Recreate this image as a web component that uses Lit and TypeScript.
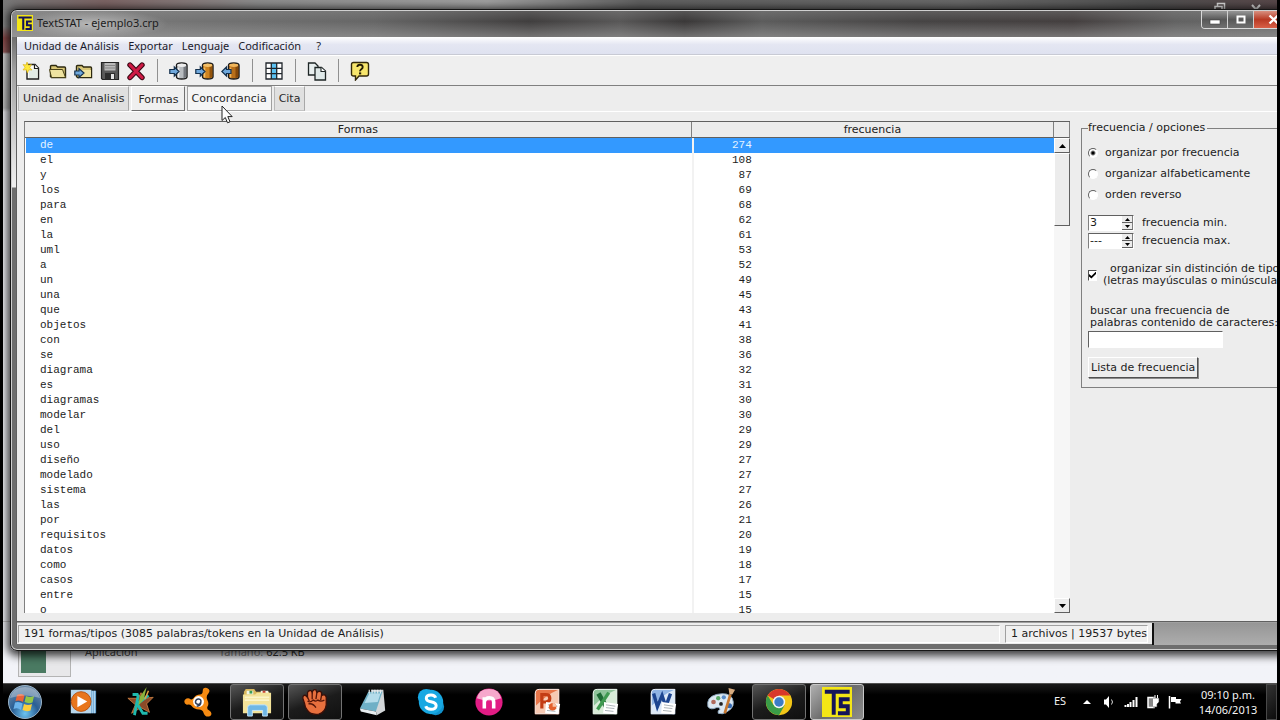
import { LitElement, html, css, svg, nothing } from "lit";
import { customElement, state } from "lit/decorators.js";
import { classMap } from "lit/directives/class-map.js";

type Row = [string, number];

const ROWS: Row[] = [
  ["de", 274], ["el", 108], ["y", 87], ["los", 69], ["para", 68], ["en", 62],
  ["la", 61], ["uml", 53], ["a", 52], ["un", 49], ["una", 45], ["que", 43],
  ["objetos", 41], ["con", 38], ["se", 36], ["diagrama", 32], ["es", 31],
  ["diagramas", 30], ["modelar", 30], ["del", 29], ["uso", 29], ["diseño", 27],
  ["modelado", 27], ["sistema", 27], ["las", 26], ["por", 21],
  ["requisitos", 20], ["datos", 19], ["como", 18], ["casos", 17],
  ["entre", 15], ["o", 15],
];

const tsLogo = svg`
  <rect width="32" height="32" fill="#f4e616"/>
  <path d="M3 5H29.500M12.500 5V29.500M29.500 13H20V20.500H27.500V28H17" fill="none" stroke="#14145a" stroke-width="4.200"/>`;

const cylinder = (light: string, mid: string, dark: string, back: boolean) => svg`
  <path d="M7.5 4.2C7.5 2.8 10 2 12.700 2S18 2.800 18 4.200V15.800C18 17.200 15.500 18 12.700 18S7.500 17.200 7.500 15.800Z" fill="${mid}" stroke="#1c1c1c" stroke-width="1.400"/>
  <path d="M14.500 6V17.200L17.300 16V4.800Z" fill="${dark}"/>
  <path d="M9.500 6.500V16.500" stroke="${light}" stroke-width="1.600"/>
  <ellipse cx="12.700" cy="4.300" rx="4.500" ry="1.700" fill="${light}"/>
  <path d="${back ? "M10 8.500H5.500V6L0.800 10.500L5.500 15V12.500H10Z" : "M0.800 8.500H5.300V6L10 10.500L5.300 15V12.500H0.800Z"}" fill="#6fa8dc" stroke="#14304c" stroke-width="1.200"/>`;

const folder = svg`
  <path d="M2.500 15.500V5.500Q2.500 4.500 3.500 4.500H8L9.500 6H16.500Q17.500 6 17.500 7V16.500H3.500Z" fill="#d9c777" stroke="#2e2a10" stroke-width="1.400"/>`;

const toolIcons: Record<string, unknown> = {
  nuevo: svg`
    <path d="M5 3.500H13L16.500 7V18H5Z" fill="#fbfbf4" stroke="#1e1e1e" stroke-width="1.400"/>
    <path d="M7 9L15.500 8V17H7Z" fill="#e2ebe6"/>
    <path d="M12.500 3.500V7.500H16.500" fill="#fff" stroke="#1e1e1e" stroke-width="1.200"/>
    <path d="M5 1L6.300 4.200L9.500 3.500L7.800 6.500L10 9L6.800 8.800L5.500 12L4.300 8.800L1 9L3 6.300L1 3.500L4 4Z" fill="#ffe93b" stroke="#d8ae10" stroke-width=".6"/>`,
  abrir: svg`${folder}
    <path d="M3.500 16.500L1.500 8.500H14.500L17.500 16.500Z" fill="#efe3a0" stroke="#4a4318" stroke-width="1"/>`,
  importar: svg`${folder}
    <path d="M4 16L6 9H17V16Z" fill="#efe3a0"/>
    <path d="M.8 10H5V7.500L10 12L5 16.500V14H.8Z" fill="#6fa8dc" stroke="#14304c" stroke-width="1.200"/>`,
  guardar: svg`
    <path d="M1.500 1.500H18.500V18.500H2.500L1.500 17.500Z" fill="#5a5a5a" stroke="#242424" stroke-width="1.200"/>
    <rect x="4.500" y="2" width="11" height="7.500" fill="#b9b9b9"/>
    <path d="M5 4.500H15M5 7H15" stroke="#858585"/>
    <rect x="5" y="12" width="10" height="6.500" fill="#2e2e2e"/>
    <rect x="11" y="13" width="3" height="5" fill="#e4e4e4"/>`,
  borrar: svg`
    <path d="M4 4L16 16.500M16 4L4 16.500" stroke="#3a0814" stroke-width="5.400" stroke-linecap="round"/>
    <path d="M4 4L16 16.500M16 4L4 16.500" stroke="#cf1a45" stroke-width="3.200" stroke-linecap="round"/>`,
  base: cylinder("#eeeeee", "#b8bcc0", "#74787e", false),
  agregar: cylinder("#f3c06a", "#cf8420", "#93540c", false),
  quitar: cylinder("#f0b65c", "#b86f1a", "#84480a", true),
  tabla: svg`
    <rect x="2" y="2" width="16" height="16" fill="#fff"/>
    <rect x="7" y="2" width="6" height="16" fill="#5cc2f2"/>
    <path d="M2 2H18V18H2ZM7.300 2V18M12.700 2V18M2 7.300H18M2 12.700H18" fill="none" stroke="#20262c" stroke-width="1.300"/>`,
  copiar: svg`
    <path d="M1.500 2H8L11 5V14H1.500Z" fill="#e8efef" stroke="#1e2626" stroke-width="1.300"/>
    <path d="M8 6.500H14.500L18.500 10V19H8Z" fill="#dfe9e9" stroke="#1e2626" stroke-width="1.300"/>
    <path d="M14 6.500V10.500H18.500" fill="#fff" stroke="#1e2626" stroke-width="1.100"/>`,
  ayuda: svg`
    <path d="M3.500 1.500H16.500Q18.500 1.500 18.500 3.500V13Q18.500 15 16.500 15H9L5.500 19V15H3.500Q1.500 15 1.500 13V3.500Q1.500 1.500 3.500 1.500Z" fill="#f8e66c" stroke="#33290a" stroke-width="1.400"/>
    <path d="M7.300 6Q7.500 3.800 10 3.800T12.700 6Q12.700 7.300 11.300 8.200T10.100 10.300" fill="none" stroke="#241c04" stroke-width="1.900"/>
    <rect x="9" y="11.400" width="2.200" height="2" fill="#241c04"/>`,
};

const TOOL_GROUPS: [string, string][][] = [
  [["nuevo", "Nuevo corpus"], ["abrir", "Abrir corpus"], ["importar", "Importar corpus"], ["guardar", "Guardar"], ["borrar", "Borrar"]],
  [["base", "Añadir archivo"], ["agregar", "Añadir de la web"], ["quitar", "Quitar archivo"]],
  [["tabla", "Exportar tabla"]],
  [["copiar", "Copiar"]],
  [["ayuda", "Ayuda"]],
];

const officePage = (a: string, b: string) => svg`
  <path d="M7 2H29V29H3V7Q3 2 7 2Z" fill="${a}"/>
  <path d="M4 20Q16 8 28 3V28H4Z" fill="${b}"/>
  <path d="M3.500 14V7Q3.500 2.500 8 2.500H28.500V28.500H3.500Z" fill="none" stroke="#f4f4f4" stroke-width="1"/>`;

const note = svg`
  <path d="M15 16L30 18L28 29L14 28Z" fill="#fff"/>
  <path d="M17 19L27 20.500M17 22L26 23M16 25L25 26" stroke="#a8b0b4" stroke-width="1"/>`;

const taskIcons: Record<string, unknown> = {
  media: svg`
    <path d="M5 4H30V28H5Z" fill="#4f93c8"/>
    <path d="M26.500 4V28M28.500 4V28" stroke="#d5ecfa"/>
    <path d="M3 3H25V28H3Z" fill="#b8d6ea"/>
    <circle cx="14" cy="15.500" r="10.500" fill="#e8761c" stroke="#b9500c"/>
    <path d="M10 9.500L20.500 15.500L10 21.500Z" fill="#fff"/>`,
  estrella: svg`
    <path d="M16 6L19 12L29 11L22 18L25 27L16 22L6 28L10 19L2 12L13 12Z" fill="#8c4a28" stroke="#d88a48" stroke-width=".8"/>
    <path d="M7 8H12L13 11M13 9L9 30M24 9L12 18L18 28H23" fill="none" stroke="#1fb9ae" stroke-width="3"/>
    <path d="M22 0L19 13L13 20L15 10Z" fill="#8cb43c"/>
    <path d="M24 4L20 13" stroke="#e8a040" stroke-width="1.600"/>`,
  avast: svg`
    <path d="M17 8Q20 8 20 4Q20 0 24.500 1Q29 3 26 7Q23 10 25 14Q27 18 25 21Q24 24 27 25Q31 28 28 31Q23 33 21 28Q20 24 16 24Q11 24 8 20Q6 18 3 19Q-1 17 1 13.500Q4 11 7 13Q9 14 11 11Q13 8 17 8Z" fill="#f58a12"/>
    <circle cx="15.500" cy="15.500" r="5.800" fill="#fff"/>
    <path d="M18 16Q17 19 14.500 18.500Q12 18 12.300 15.300Q13 12.500 15.800 12.800Q18.500 13.200 18 16Q18 20 13.500 20.500" fill="none" stroke="#2f3f5c" stroke-width="1.600"/>`,
  carpeta: svg`
    <path d="M2 5L4 2H13L15 5H29V26H2Z" fill="#d9b85e"/>
    <path d="M5 4H12V8H5ZM20 4H28V9H20Z" fill="#f2f7e8"/>
    <path d="M8 4H11V7H8Z" fill="#3b9c55"/><path d="M22 4H25V7H22Z" fill="#c84536"/>
    <path d="M1 8H14L16 6H31V28H1Z" fill="#f3e39a"/>
    <path d="M3 11H29M3 14H29" stroke="#fbf4c8" stroke-width="2"/>
    <path d="M6 31V22Q6 19 9 19H24Q27 19 27 22V31H22V25H11V31Z" fill="#6fb7e6" stroke="#c9e8fa"/>`,
  mano: svg`
    <path d="M5 18L3 12Q3 8 6 9L8 11L8 6Q9 3 12 4L13 6Q14 2 17 3L18 6Q21 3 23 6L23 9Q27 7 28 11L28 19Q27 27 20 29Q11 30 8 25Q5 21 5 18Z" fill="#e8703e" stroke="#3a0f08" stroke-width="1.400"/>
    <path d="M8 11L10 15M13 6V13M18 6L17 13M23 9L22 14M8 15Q11 17 14 14Q17 16 19 14Q22 16 26 14M9 18Q14 17 17 22" fill="none" stroke="#551508" stroke-width="1.400"/>`,
  bloc: svg`
    <path d="M14 3H27L29 25L20 30Z" fill="#d2d6d8"/>
    <path d="M11 5L26 5L19 26L2 23Z" fill="#6fb0c6"/>
    <path d="M12 7L24 7L21 16L7 17Z" fill="#b4dcea"/>
    <path d="M2 23L19 26L20 30L3 26Z" fill="#e8eef0"/>
    <path d="M12 3V7M15 3V7M18 3V7M21 3V7M24 3V7" stroke="#e8eef0" stroke-width="1.200"/>`,
  skype: svg`
    <circle cx="11" cy="11" r="9" fill="#16a9e6"/><circle cx="21" cy="21" r="9" fill="#1192cc"/><circle cx="16" cy="16" r="13" fill="#18a8e2"/>
    <path d="M21 11.500Q20 8.500 16 8.500Q11 8.500 11 12Q11 14.800 16 15.800Q21.500 17 21.500 20Q21.300 23.800 16 23.800Q11.500 23.800 10.300 20.500" fill="none" stroke="#fff" stroke-width="3.200"/>`,
  nimbuzz: svg`
    <circle cx="16" cy="16" r="14.500" fill="#e21c84"/>
    <path d="M3 12Q5 2 16 2T29 12Q16 17 3 12Z" fill="#f6a8cc"/>
    <path d="M11 23V11M11 16Q12 11.500 16.500 11.500Q21 11.500 21 16V23" fill="none" stroke="#fff" stroke-width="3.800"/>`,
  powerpoint: svg`${officePage("#e8764a", "#f7c9b2")}
    <path d="M10.500 23V8H14.500Q19 8 19 12T14.500 16H10.500" fill="none" stroke="#c33c14" stroke-width="3.400"/>${note}
    <circle cx="22" cy="21" r="4" fill="#e4602c"/><path d="M22 21V17A4 4 0 0 1 26 21Z" fill="#f8c4a8"/>`,
  excel: svg`${officePage("#8fc49a", "#d8ecd8")}
    <path d="M9 7L19 24" stroke="#1e6b34" stroke-width="5"/><path d="M20 6L8 24" stroke="#3f9a50" stroke-width="3.600"/>${note}`,
  word: svg`${officePage("#8fb4e4", "#dce9f8")}
    <path d="M6 7L10 21L15 9L19 21L24 7" fill="none" stroke="#1c4590" stroke-width="3.600"/>${note}`,
  paint: svg`
    <path d="M2 21Q0 11 11 8Q24 5 28 12Q32 21 23 26Q17 30 13 28Q12 25 15 24Q15 21 11 22Q5 25 2 21Z" fill="#dce8f2" stroke="#8aa4bc"/>
    <circle cx="8" cy="16" r="2.500" fill="#b06a5c"/><circle cx="13" cy="12" r="2.300" fill="#58a868"/><circle cx="19" cy="11" r="2.300" fill="#5a8cc8"/><circle cx="25" cy="20" r="2.700" fill="#3468b0"/><circle cx="16" cy="18" r="2" fill="#222"/>
    <path d="M26 8L20 28" stroke="#c87830" stroke-width="2.800"/>
    <path d="M24 1L31 3L28 8L25 8Z" fill="#d8ac80"/>`,
  chrome: svg`
    <circle cx="16" cy="16" r="14" fill="#f2c618"/>
    <path d="M16 16L3.900 9A14 14 0 0 1 28.100 9Z" fill="#d8382a"/>
    <path d="M3.900 9A14 14 0 0 0 16 30L22 19.500L10 19Z" fill="#3a9c48"/>
    <path d="M16 9H28.100L30 16L22 19Z" fill="#f2c618"/>
    <circle cx="16" cy="16" r="6.600" fill="#f4f4f4"/><circle cx="16" cy="16" r="5" fill="#3b7cc6"/>`,
  textstat: tsLogo,
};

const TASKS: { id: string; label: string; open?: boolean; current?: boolean }[] = [
  { id: "media", label: "Reproductor" },
  { id: "estrella", label: "Editor" },
  { id: "avast", label: "Antivirus" },
  { id: "carpeta", label: "Explorador", open: true },
  { id: "mano", label: "Grabador", open: true },
  { id: "bloc", label: "Bloc de notas" },
  { id: "skype", label: "Skype" },
  { id: "nimbuzz", label: "Nimbuzz" },
  { id: "powerpoint", label: "PowerPoint" },
  { id: "excel", label: "Excel" },
  { id: "word", label: "Word" },
  { id: "paint", label: "Paint" },
  { id: "chrome", label: "Chrome", open: true },
  { id: "textstat", label: "TextSTAT", open: true, current: true },
];

const TABS = ["Unidad de Analisis", "Formas", "Concordancia", "Cita"];

const reset = css`
  :host, :host * { box-sizing: border-box; }
  button { margin: 0; padding: 0; border: 0; background: none; font: inherit; color: inherit; }
  a { color: inherit; text-decoration: none; }
  svg { display: block; }
`;

@customElement("frequency-table")
class FrequencyTable extends LitElement {
  @state() private selected = 0;

  static styles = [reset, css`
    :host { display: flex; min-width: 0; min-height: 0; border-left: 1px solid #808080; border-top: 1px solid #606060; background: #fff; }
    .list { flex: 1; min-width: 0; overflow: hidden; }
    table { width: 100%; border-collapse: separate; border-spacing: 0; table-layout: fixed; }
    .forms { width: 64.8%; }
    th { height: 16px; padding: 0; background: #ececec; border-bottom: 1px solid #606060; border-right: 1px solid #808080; font: 11px/14px "DejaVu Sans", sans-serif; color: #222; }
    td { height: 15px; padding: 0 0 0 14px; font: 11px/15px "Liberation Mono", monospace; color: #1c1c1c; border-left: 1px solid #fff; }
    td + td { border-left: 2px solid #f2f2f2; padding: 0; }
    .count { display: block; width: 58px; text-align: right; }
    .selected td { background: #3399ff; color: #e4f3ff; }
    .scroll { width: 16px; display: flex; flex-direction: column; align-items: stretch; background: #f6f6f6; }
    .corner { height: 16px; background: #ececec; border-bottom: 1px solid #606060; border-right: 1px solid #808080; }
    .arrow { height: 15px; display: grid; place-items: center; background: #ececec; border: 1px solid; border-color: #fff #606060 #606060 #fff; }
    .thumb { height: 73px; background: #ececec; border: 1px solid; border-color: #fff #606060 #606060 #fff; }
    .space { flex: 1; }
  `];

  render() {
    return html`
      <div class="list">
        <table>
          <thead><tr><th class="forms" scope="col">Formas</th><th scope="col">frecuencia</th></tr></thead>
          <tbody>
            ${ROWS.map(([word, n], i) => html`
              <tr class=${classMap({ selected: i === this.selected })} @click=${() => (this.selected = i)}>
                <td>${word}</td><td><span class="count">${n}</span></td>
              </tr>`)}
          </tbody>
        </table>
      </div>
      <div class="scroll">
        <div class="corner"></div>
        <button class="arrow" aria-label="Subir"><svg width="7" height="4"><path d="M0 4L3.500 0L7 4Z"/></svg></button>
        <div class="thumb"></div>
        <div class="space"></div>
        <button class="arrow" aria-label="Bajar"><svg width="7" height="4"><path d="M0 0L3.500 4L7 0Z"/></svg></button>
      </div>`;
  }
}

@customElement("frequency-options")
class FrequencyOptions extends LitElement {
  static styles = [reset, css`
    :host { display: block; font: 11px/14px "DejaVu Sans", sans-serif; color: #1c1c1c; white-space: nowrap; }
    fieldset { margin: 0; min-width: 0; border: 1px solid #808080; padding: 8px 6px 9px 6px; }
    legend { height: 14px; padding: 0 2px 0 0; }
    .radio { display: flex; align-items: center; gap: 7px; height: 20px; margin-bottom: 1px; }
    input { font: inherit; color: inherit; margin: 0; border-radius: 0; appearance: none; outline: 0; }
    input[type="radio"] { width: 10px; height: 10px; border: 1px solid; border-color: #606060 #fff #fff #606060; border-radius: 50%; background: #fff; }
    input[type="radio"]:checked { background: radial-gradient(circle, #000 1px, #fff 3px); }
    .spins { padding-top: 9px; display: grid; gap: 2px; }
    .spin { display: flex; align-items: center; height: 16px; gap: 8px; }
    .field { display: flex; width: 46px; height: 16px; background: #fff; border: 1px solid; border-color: #606060 #fff #fff #808080; }
    .field input { flex: 1; min-width: 0; border: 0; padding: 0 1px; background: none; }
    .steps { width: 11px; display: grid; grid-template-rows: 1fr 1fr; }
    .steps button { display: grid; place-items: center; background: #ececec; border-bottom: 1px solid #606060; border-right: 1px solid #808080; }
    .check { display: flex; align-items: center; gap: 6px; margin-top: 14px; line-height: 12px; }
    .check input { width: 11px; height: 11px; border: 1px solid; border-color: #505050 #fff #fff #505050; background: #fff; display: grid; place-items: center; }
    .check input:checked::before { content: ""; width: 7px; height: 7px; background: #000; clip-path: polygon(0 35%, 35% 65%, 100% 0, 100% 35%, 35% 100%, 0 70%); }
    .indent { padding-left: 7px; }
    .search { display: grid; gap: 2px; justify-items: start; margin-top: 18px; line-height: 12px; }
    .search span { padding-left: 2px; }
    .search input { width: 135px; height: 17px; padding: 0 3px; background: #fff; border: 1px solid; border-color: #606060 #fff #fff #606060; }
    .run { height: 21px; margin-top: 9px; padding: 0 2px; background: #ececec; border: 1px solid; border-color: #fff #505050 #505050 #fff; box-shadow: 1px 1px #8a8a8a; }
  `];

  private spin(id: string, value: string, label: string) {
    return html`
      <div class="spin">
        <div class="field">
          <input id=${id} .value=${value}>
          <div class="steps">
            <button aria-label="Aumentar"><svg width="5" height="3"><path d="M0 3L2.500 0L5 3Z"/></svg></button>
            <button aria-label="Disminuir"><svg width="5" height="3"><path d="M0 0L2.500 3L5 0Z"/></svg></button>
          </div>
        </div>
        <label for=${id}>${label}</label>
      </div>`;
  }

  render() {
    return html`
      <fieldset>
        <legend>frecuencia / opciones</legend>
        ${["organizar por frecuencia", "organizar alfabeticamente", "orden reverso"].map((t, i) => html`
          <label class="radio"><input type="radio" name="orden" ?checked=${i === 0}>${t}</label>`)}
        <div class="spins">
          ${this.spin("min", "3", "frecuencia min.")}
          ${this.spin("max", "---", "frecuencia max.")}
        </div>
        <label class="check">
          <input type="checkbox" checked>
          <span><span class="indent">organizar sin distinción de tipo</span><br>(letras mayúsculas o minúsculas</span>
        </label>
        <label class="search">
          <span>buscar una frecuencia de<br>palabras contenido de caracteres:</span>
          <input type="text">
        </label>
        <button class="run">Lista de frecuencia</button>
      </fieldset>`;
  }
}

@customElement("textstat-window")
class TextstatWindow extends LitElement {
  @state() private tab = 1;

  static styles = [reset, css`
    :host {
      display: flex; flex-direction: column; padding: 0 6px 6px 5px; overflow: visible;
      border: 1px solid #161616; border-radius: 7px;
      background: linear-gradient(#8a8a8a 0, #6a6a6a 8px, #707070 28px, #a0a0a0 60px, #e0e0e0 150px, #f0f0f0 177px, #6e6e6e 178px);
      box-shadow: inset 0 0 0 1px #d0d0d0, 0 2px 8px 3px rgba(0, 0, 0, .75);
    }
    .title {
      display: flex; align-items: center; gap: 4px; height: 26px; margin: 1px -5px 0 -4px; padding-left: 5px; padding-bottom: 2px;
      border-radius: 5px 5px 0 0; font: 12px/16px "Noto Sans", sans-serif; color: #1c1c1c;
      background:
        radial-gradient(ellipse 76px 14px at 80px 50%, rgba(190, 190, 190, .9), transparent),
        linear-gradient(rgba(150, 150, 150, .3), transparent 40%, rgba(160, 160, 160, .55)),
        linear-gradient(90deg, #858585, #757575 12%, #666 28%, #403e3e 40%, #585757 47%, #3a3838 52%, #5c5c5c 58%, #464444 70%, #443f3f 82%, #626262 90%, #6c6c6c);
    }
    .name { flex: 1; font-size: 11px; }
    .caption { display: flex; align-self: flex-start; border: 1px solid #d8d8d8; border-top: 0; border-radius: 0 0 4px 4px; overflow: hidden; }
    .caption button { width: 26px; height: 17px; display: grid; place-items: center; border-right: 1px solid #d0d0d0; background: linear-gradient(#969696, #585858 50%, #707070); }
    .caption .close { width: 50px; padding-left: 14px; justify-items: start; border: 0; background: linear-gradient(#d89080, #b83a24 50%, #d86048); }
    .client { flex: 1; min-height: 0; display: flex; flex-direction: column; background: #ededed; border-left: 1px solid #606060; }
    .menu { display: flex; gap: 9px; height: 18px; padding-left: 7px; align-items: center; background: linear-gradient(#fff, #e4e6f2 45%, #dfe2f0); border-bottom: 1px solid #c8cad4; font: 11px/16px "Noto Sans", sans-serif; color: #1a1a2a; }
    .menu .help { margin-left: 6px; }
    .tools { display: flex; align-items: center; height: 31px; padding-left: 5px; background: #efefef; border-top: 1px solid #fff; border-bottom: 1px solid #808080; }
    .group { display: flex; gap: 6px; }
    .sep { width: 1px; height: 23px; margin: 0 11px; background: #909090; }
    .tabs { display: flex; height: 26px; align-items: flex-start; gap: 2px; padding-left: 1px; border-bottom: 1px solid #fff; font: 11px/14px "DejaVu Sans", sans-serif; color: #2a2a2a; }
    .tabs button { height: 25px; padding: 0 4px; background: #e0e0e0; border: 1px solid; border-color: #fff #a8a8a8 #c4c4c4 #b8b8b8; }
    .tabs .active { padding: 2px 5px 0 6px; background: #efefef; border-color: #fff #707070 #707070 #fff; }
    .tabs .hover { background: #f5f5f5; border-color: #a0a0a0; }
    .body { flex: 1; min-height: 0; display: grid; grid-template-columns: minmax(0, 1fr) 230px; padding: 9px 0 8px 7px; border-bottom: 1px solid #606060; }
    frequency-options { padding: 0 11px; }
    .status { display: grid; grid-template-columns: minmax(0, 1fr) 144px 148px; gap: 4px; height: 22px; font: 11px/16px "DejaVu Sans", sans-serif; color: #1c1c1c; border-top: 1px solid #a0a0a0; }
    .cell { margin: 2px 0 3px 1px; padding-left: 5px; background: #f0f0f0; border: 1px solid; border-color: #a0a0a0 #fff #fff #a0a0a0; white-space: nowrap; }
    .rest { background: linear-gradient(#969696, #adadad); border-left: 2px solid #101010; margin-bottom: 1px; }
  `];

  render() {
    return html`
      <div class="title">
        <svg width="16" height="16" viewBox="0 0 32 32">${tsLogo}</svg>
        <span class="name">TextSTAT - ejemplo3.crp</span>
        <div class="caption">
          <button aria-label="Minimizar"><svg width="12" height="11"><rect x="1" y="6" width="10" height="4" fill="#fff" stroke="#444" stroke-width=".6"/></svg></button>
          <button aria-label="Maximizar"><svg width="12" height="11"><path d="M2.500 2.500H9.500V8.500H2.500Z" fill="none" stroke="#fff" stroke-width="2"/></svg></button>
          <button class="close" aria-label="Cerrar"><svg width="12" height="11"><path d="M1.500 1.500L10 9.500M10 1.500L1.500 9.500" stroke="#fff" stroke-width="2.400"/></svg></button>
        </div>
      </div>
      <div class="client">
        <nav class="menu">
          <a href="#">Unidad de Análisis</a><a href="#">Exportar</a><a href="#">Lenguaje</a><a href="#">Codificación</a><a href="#" class="help">?</a>
        </nav>
        <div class="tools">
          ${TOOL_GROUPS.map((g, i) => html`
            ${i ? html`<span class="sep"></span>` : nothing}
            <div class="group">${g.map(([id, label]) => html`
              <button aria-label=${label}><svg width="20" height="20" viewBox="0 0 20 20" fill="none">${toolIcons[id]}</svg></button>`)}
            </div>`)}
        </div>
        <div class="tabs">
          ${TABS.map((t, i) => html`
            <button class=${classMap({ active: i === this.tab, hover: i === 2 })} @click=${() => (this.tab = i)}>${t}</button>`)}
        </div>
        <div class="body">
          <frequency-table></frequency-table>
          <frequency-options></frequency-options>
        </div>
        <div class="status">
          <div class="cell">191 formas/tipos (3085 palabras/tokens en la Unidad de Análisis)</div>
          <div class="cell">1 archivos | 19537 bytes</div>
          <div class="rest"></div>
        </div>
      </div>`;
  }
}

@customElement("task-bar")
class TaskBar extends LitElement {
  static styles = [reset, css`
    :host { display: flex; align-items: stretch; background: linear-gradient(#1a1a1a, #000 30%); border-top: 1px solid #505050; font: 12px/16px "Noto Sans", sans-serif; color: #f4f4f4; }
    .start { width: 44px; margin-right: 9px; display: grid; place-items: center; }
    .apps { display: flex; gap: 4px; flex: 1; min-width: 0; }
    .apps button { width: 54px; display: grid; place-items: center; border: 1px solid transparent; border-radius: 3px; }
    .apps .open { border-color: #727272; background: linear-gradient(160deg, #555, #1c1c1c 50%, #101010); }
    .apps .current { border-color: #c8c8c8; background: linear-gradient(135deg, #b0b0b0, #6c6c6c 50%, #8c8c8c); }
    .tray { display: flex; align-items: center; }
    .lang { width: 22px; font-size: 11px; padding-bottom: 3px; }
    .tray button { width: 22px; height: 24px; display: grid; place-items: center; }
    .clock { width: 72px; margin-left: 6px; text-align: center; font-size: 11px; line-height: 15px; }
    .show { width: 11px; margin-left: 2px; border: 1px solid #484848; background: linear-gradient(135deg, #333, #0c0c0c); }
  `];

  render() {
    return html`
      <button class="start" aria-label="Inicio">
        <svg width="36" height="34" viewBox="0 0 36 34">
          <defs><radialGradient id="orb" cx="50%" cy="85%" r="80%"><stop offset="0" stop-color="#6cc4f0"/><stop offset=".5" stop-color="#2a5e94"/><stop offset="1" stop-color="#6c8aa8"/></radialGradient></defs>
          <circle cx="18" cy="17" r="16.500" fill="url(#orb)" stroke="#9ab4c8" stroke-width="1"/>
          <path d="M10 10Q14 8 17.500 10.500L16 17Q12.500 14.500 8.500 16Z" fill="#e8643a"/>
          <path d="M19 11Q23 13 27 11L25.500 17.500Q21.500 19 17.500 17Z" fill="#94c748"/>
          <path d="M8 17.500Q12 16 15.600 18.500L14 25Q10.500 22 6.500 24Z" fill="#6cb4ec"/>
          <path d="M17 19Q21 21 25 19L23.500 25.500Q19.500 27 15.500 25Z" fill="#fbce3c"/>
          <path d="M3 13Q6 2 18 2T33 13Q18 8 3 13Z" fill="#fff" opacity=".3"/>
        </svg>
      </button>
      <div class="apps">
        ${TASKS.map((t) => html`
          <button class=${classMap({ open: !!t.open, current: !!t.current })} aria-label=${t.label}>
            <svg width="30" height="30" viewBox="0 0 32 32" fill="none">${taskIcons[t.id]}</svg>
          </button>`)}
      </div>
      <div class="tray">
        <span class="lang">ES</span>
        <button aria-label="Mostrar iconos ocultos"><svg width="8" height="4"><path d="M0 4L4 0L8 4Z" fill="#fff"/></svg></button>
        <button aria-label="Volumen"><svg width="12" height="14"><path d="M1 4.500H3L6 1V13L3 9.500H1Z" fill="#fff"/><path d="M8.500 4.500Q10.500 7 8.500 9.500" stroke="#ddd" fill="none"/></svg></button>
        <button aria-label="Red"><svg width="14" height="12"><path d="M1.500 9V11M4 8V11M6.500 6V11M9.500 4V11M12.500 1V11" stroke="#fff" stroke-width="2"/></svg></button>
        <button aria-label="Batería"><svg width="14" height="14"><path d="M2 2.500H8V12.500H2Z" fill="#888" stroke="#fff" stroke-width="1.500"/><path d="M7 3H13V7L11 9V12H7" fill="#fff" stroke="#333" stroke-width=".6"/><path d="M9 0V3M11.500 0V3" stroke="#fff"/></svg></button>
        <button aria-label="Centro de actividades"><svg width="14" height="14"><path d="M1.500 1V13.500" stroke="#fff" stroke-width="1.500"/><path d="M3 2H8V4H13.500L12 6.500L13 8.500H7.500V7H3Z" fill="#fff"/></svg></button>
        <div class="clock">09:10 p.m.<br>14/06/2013</div>
      </div>
      <button class="show" aria-label="Mostrar escritorio"></button>`;
  }
}

@customElement("app-root")
class AppRoot extends LitElement {
  static styles = [reset, css`
    :host { display: grid; grid-template-rows: minmax(0, 1fr) 37px; height: 100vh; padding: 0 3px; background: #000; overflow: hidden; }
    .desktop {
      position: relative; overflow: hidden; display: flex; flex-direction: column; justify-content: flex-end;
      background: linear-gradient(#777 0, #8c8c8c 26px, #8c4a4a 38px, #9a6060 52px, #d6d6d6 54px, #c4c4c4 108px, #f2f2f6 112px, #f2f3f8);
    }
    .behind { position: absolute; inset: 0 0 auto; height: 10px; display: flex; justify-content: flex-end; align-items: flex-end; gap: 25px; padding-right: 16px; background: linear-gradient(90deg, #777, #7c6464 8%, #8c8c8c 20%, #a0a0a0 38%, #606060 50%, #686868 75%, #505050 90%, #58484a); }
    .details { display: flex; align-items: center; height: 62px; padding: 0 15px 2px; font: 11px/16px "Noto Sans", sans-serif; color: #4a4a4a; border-top: 1px solid #c8c8c8; }
    .thumb { width: 53px; height: 50px; padding: 2px; border: 1px solid #b4b4b4; background: #e8e8ea; }
    .picture { width: 25px; height: 43px; background: #4a7a62; }
    .kind { width: 148px; padding-left: 14px; }
    .size { color: #888; }
    .size b { color: #333; font-weight: 400; }
    textstat-window { position: absolute; inset: 9px -30px 32px 7px; }
    .pointer { position: absolute; left: 218px; top: 105px; }
  `];

  render() {
    return html`
      <div class="desktop">
        <div class="behind">
          <svg width="12" height="8"><path d="M3.500 5V1.500H10.500V7" stroke="#ddd" fill="none" stroke-width="1.500"/><path d="M1 8V4.500H8V8" stroke="#eee" fill="none" stroke-width="1.500"/></svg>
          <svg width="10" height="8"><path d="M1 3L5 7.500L9 3" stroke="#ddd" fill="none" stroke-width="2"/></svg>
        </div>
        <div class="details">
          <div class="thumb"><div class="picture"></div></div>
          <span class="kind">Aplicación</span>
          <span class="size">Tamaño: <b>62.5 KB</b></span>
        </div>
        <textstat-window></textstat-window>
        <svg class="pointer" width="12" height="19" viewBox="0 0 12 19"><path d="M1 1V15.500L4.300 12.500L6.500 17.800L9 16.800L6.800 11.600H11.200Z" fill="#fff" stroke="#222"/></svg>
      </div>
      <task-bar></task-bar>`;
  }
}
